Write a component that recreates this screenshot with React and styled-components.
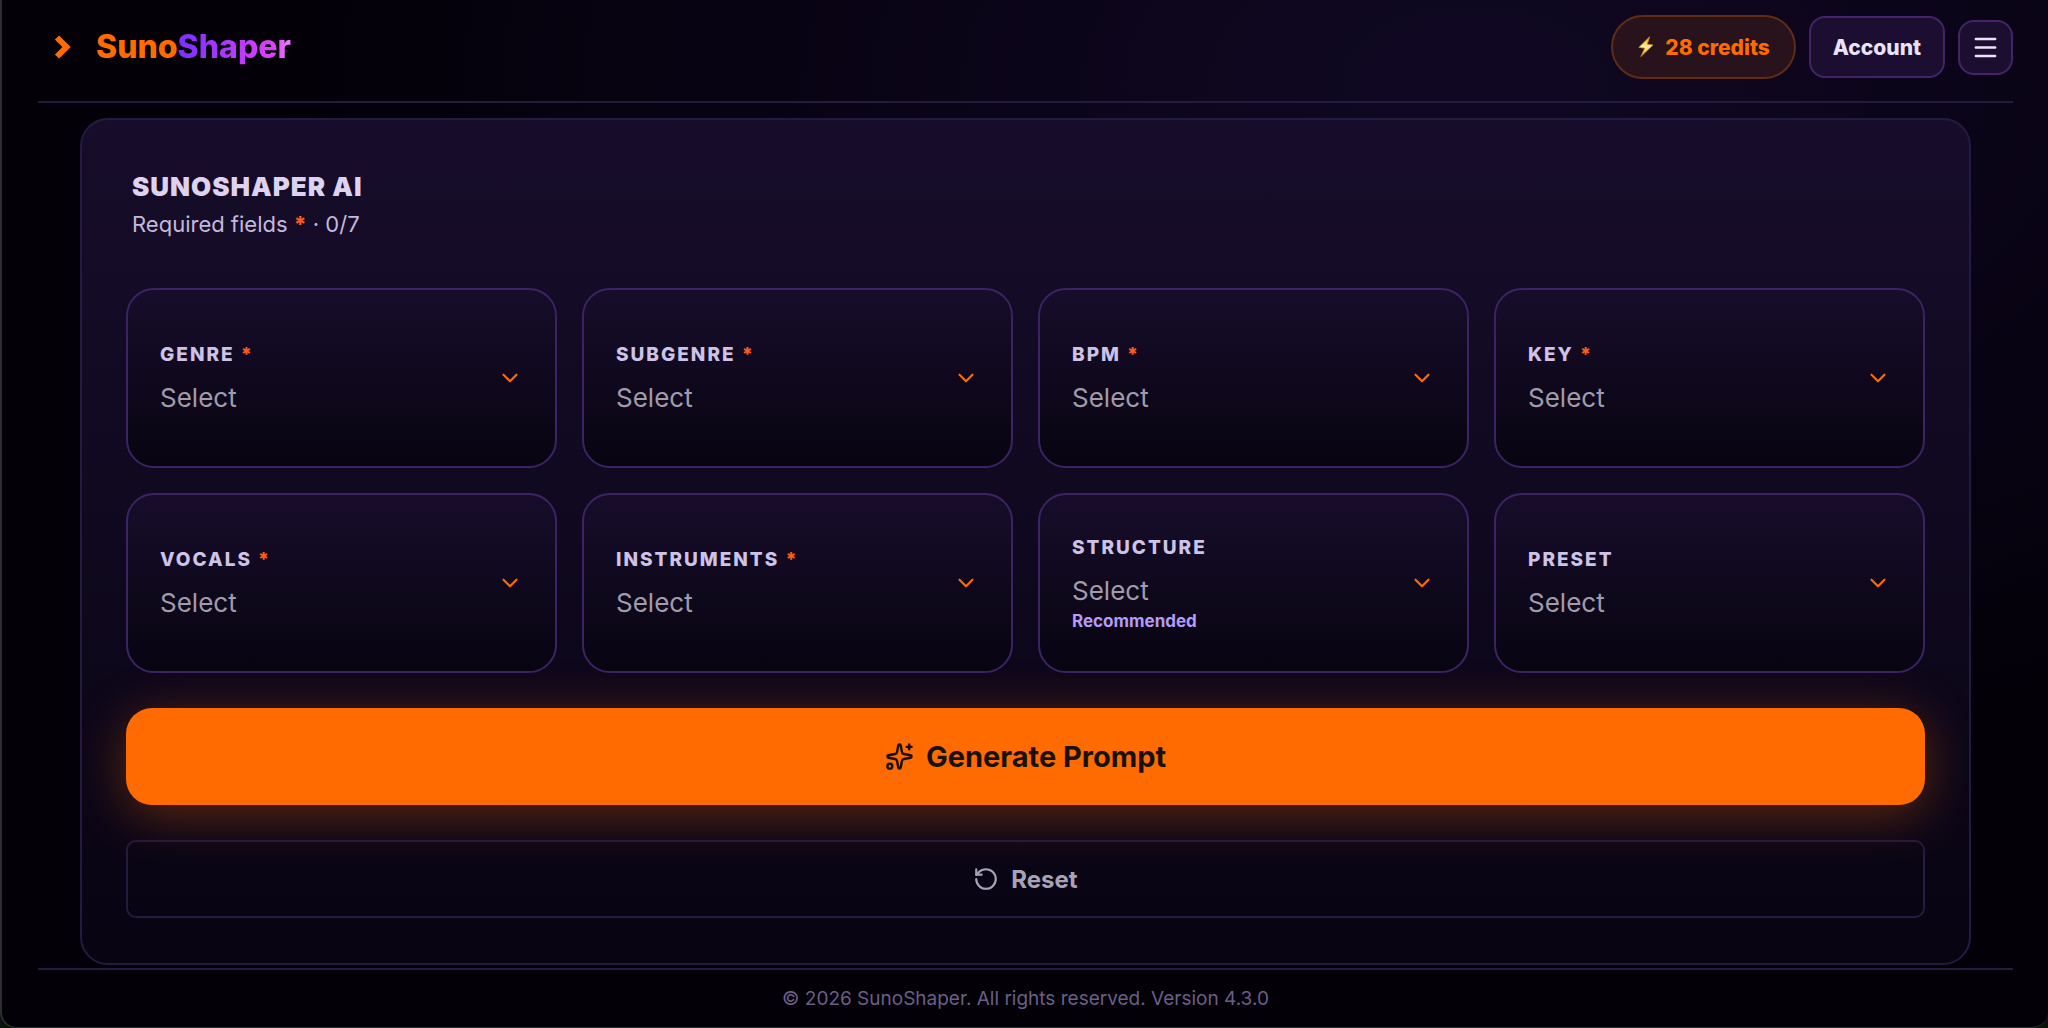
import React, { useState } from 'react'
import styled, { createGlobalStyle, css } from 'styled-components'
import { ChevronDown, Menu, RotateCcw, Sparkles } from 'lucide-react'

const fields = [
  { id: 'genre', label: 'Genre', required: true, options: ['Electronic', 'Rock', 'Hip-Hop'] },
  { id: 'subgenre', label: 'Subgenre', required: true, options: ['House', 'Indie', 'Trap'] },
  { id: 'bpm', label: 'BPM', required: true, options: ['90', '120', '140'] },
  { id: 'key', label: 'Key', required: true, options: ['C major', 'A minor'] },
  { id: 'vocals', label: 'Vocals', required: true, options: ['Female', 'Male'] },
  { id: 'instruments', label: 'Instruments', required: true, options: ['Synth', 'Guitar', 'Piano'] },
  { id: 'structure', label: 'Structure', hint: 'Recommended', options: ['Verse / Chorus'] },
  { id: 'preset', label: 'Preset', options: ['Radio', 'Club'] },
]

const REQUIRED_TOTAL = 7

const BoltIcon = () => (
  <svg width="18" height="22" viewBox="0 0 18 22" aria-hidden="true">
    <defs>
      <linearGradient id="bolt" x1="0" y1="0" x2="0" y2="1">
        <stop offset="0" stopColor="#f5a30c" />
        <stop offset="0.5" stopColor="#fff2a0" />
        <stop offset="1" stopColor="#f0b020" />
      </linearGradient>
    </defs>
    <path
      d="M12.6 0.8 1.8 11.4l6 .8L3.800 20.6 16 9l-5.8-.7z"
      fill="url(#bolt)"
      stroke="#d98a10"
      strokeWidth="0.8"
      strokeLinejoin="round"
    />
  </svg>
)

const LogoMark = () => (
  <svg width="18" height="26" viewBox="0 0 18 26" aria-hidden="true">
    <path d="M3 3.5 12.5 13 3 22.5" fill="none" stroke="#ff6b00" strokeWidth="6" />
  </svg>
)

const Field = ({ id, label, required, hint, options, value, onChange }) => (
  <Tile htmlFor={id}>
    <TileBody>
      <TileLabel>
        {label} {required && <Star>*</Star>}
      </TileLabel>
      <TileSelect id={id} value={value} onChange={(e) => onChange(id, e.target.value)}>
        <option value="">Select</option>
        {options.map((option) => (
          <option key={option} value={option}>
            {option}
          </option>
        ))}
      </TileSelect>
      {hint && <Hint>{hint}</Hint>}
    </TileBody>
    <ChevronDown size={26} color="#ff6b00" />
  </Tile>
)

const App = () => {
  const [values, setValues] = useState({})
  const done = fields.filter((f) => f.required && values[f.id]).length
  const handleChange = (id, value) => setValues({ ...values, [id]: value })

  return (
    <>
      <GlobalStyle />
      <Shell>
        <Header>
          <Brand href="#">
            <LogoMark />
            <BrandName>
              Suno<span>Shaper</span>
            </BrandName>
          </Brand>
          <Actions>
            <Credits type="button">
              <BoltIcon />
              28 credits
            </Credits>
            <AccountButton type="button">Account</AccountButton>
            <MenuButton type="button" aria-label="Menu">
              <Menu size={29} />
            </MenuButton>
          </Actions>
        </Header>

        <Panel>
          <PanelHead>
            <h1>SunoShaper AI</h1>
            <p>
              Required fields <Star>*</Star> · {done}/{REQUIRED_TOTAL}
            </p>
          </PanelHead>
          <Grid>
            {fields.map((field) => (
              <Field
                key={field.id}
                {...field}
                value={values[field.id] || ''}
                onChange={handleChange}
              />
            ))}
          </Grid>
          <GenerateButton type="button">
            <Sparkles size={29} />
            Generate Prompt
          </GenerateButton>
          <ResetButton type="button" onClick={() => setValues({})}>
            <RotateCcw size={26} />
            Reset
          </ResetButton>
        </Panel>

        <Footer>© 2026 SunoShaper. All rights reserved. Version 4.3.0</Footer>
      </Shell>
    </>
  )
}

export default App

const GlobalStyle = createGlobalStyle`
  *,
  *::before,
  *::after {
    box-sizing: border-box;
  }
  body {
    margin: 0;
    background: #0b140c;
    color: #ddd3f0;
    font-family: Inter, 'Liberation Sans', sans-serif;
  }
  h1,
  p {
    margin: 0;
  }
  button,
  select {
    font-family: inherit;
    cursor: pointer;
  }
`

const Shell = styled.div`
  min-height: 100vh;
  display: flex;
  flex-direction: column;
  padding: 0 35px 0 36px;
  border-left: 2px solid #2e2d33;
  border-bottom: 1px solid #2e2d33;
  border-radius: 0 0 16px 16px;
  background:
    radial-gradient(ellipse 1200px 700px at 72% 8%, rgba(76, 44, 160, 0.18), transparent 100%),
    #030008;
`

const Header = styled.header`
  display: flex;
  align-items: center;
  justify-content: space-between;
  height: 103px;
  padding-bottom: 7px;
  border-bottom: 2px solid #241b3f;
`

const Brand = styled.a`
  display: flex;
  align-items: center;
  gap: 24px;
  padding-left: 16px;
  text-decoration: none;
`

const BrandName = styled.span`
  color: #ff6b00;
  font-size: 32px;
  font-weight: 800;
  line-height: 40px;

  span {
    background: linear-gradient(90deg, #7b2fff, #e040fb 85%, #ee82ff);
    background-clip: text;
    color: transparent;
  }
`

const Actions = styled.div`
  display: flex;
  align-items: center;
  gap: 13px;
`

const pill = css`
  display: flex;
  align-items: center;
  justify-content: center;
  border: 2px solid #432469;
  border-radius: 16px;
  background: #1c0e30;
  color: #e9e2f8;
  font-size: 21px;
  font-weight: 800;
`

const Credits = styled.button`
  ${pill}
  gap: 10px;
  height: 64px;
  padding: 0 24px;
  border-color: #622b15;
  border-radius: 32px;
  background: #28121c;
  color: #ff6b00;
`

const AccountButton = styled.button`
  ${pill}
  height: 62px;
  padding: 0 22px;
`

const MenuButton = styled.button`
  ${pill}
  width: 55px;
  height: 55px;
  padding: 0;
`

const Panel = styled.main`
  margin: 15px 42px 3px;
  padding: 45px 44px;
  border: 2px solid #241b3f;
  border-radius: 28px;
  background: linear-gradient(180deg, #170d2b, #080412);
`

const PanelHead = styled.div`
  padding: 6px 6px 0;
  margin-bottom: 48px;

  h1 {
    font-size: 26px;
    font-weight: 900;
    line-height: 32px;
    letter-spacing: 1px;
    text-transform: uppercase;
  }
  p {
    margin-top: 6px;
    color: #c3b9dc;
    font-size: 22px;
    line-height: 31px;
  }
`

const Star = styled.span`
  color: #ff5c1a;
  font-weight: 800;
`

const Grid = styled.div`
  display: grid;
  grid-template-columns: repeat(4, 1fr);
  gap: 25px;

  @media screen and (max-width: 1200px) {
    grid-template-columns: repeat(2, 1fr);
  }
`

const Tile = styled.label`
  display: flex;
  align-items: center;
  min-height: 180px;
  padding: 24px 32px;
  border: 2px solid #3c2364;
  border-radius: 28px;
  background: linear-gradient(180deg, #170d2b, #080410);
  background-origin: border-box;
  cursor: pointer;
`

const TileBody = styled.div`
  display: flex;
  flex: 1;
  flex-direction: column;
`

const TileLabel = styled.span`
  color: #cdc3e6;
  font-size: 19px;
  font-weight: 800;
  line-height: 24px;
  letter-spacing: 2px;
  text-transform: uppercase;
`

const TileSelect = styled.select`
  appearance: none;
  width: 100%;
  height: 32px;
  margin-top: 15px;
  padding: 0;
  border: 0;
  background: transparent;
  color: #a09bad;
  font-size: 26px;
`

const Hint = styled.span`
  margin-top: 4px;
  color: #b49cf8;
  font-size: 17px;
  font-weight: 700;
  line-height: 20px;
`

const GenerateButton = styled.button`
  display: flex;
  align-items: center;
  justify-content: center;
  gap: 12px;
  width: 100%;
  height: 97px;
  margin-top: 35px;
  border: 0;
  border-radius: 26px;
  background: #ff6b00;
  box-shadow: 0 10px 52px rgba(255, 107, 0, 0.34);
  color: #15120f;
  font-size: 29px;
  font-weight: 700;
`

const ResetButton = styled.button`
  display: flex;
  align-items: center;
  justify-content: center;
  gap: 12px;
  width: 100%;
  height: 78px;
  margin-top: 35px;
  border: 2px solid #241b3f;
  border-radius: 10px;
  background: transparent;
  color: #a8a2b8;
  font-size: 24px;
  font-weight: 700;
`

const Footer = styled.footer`
  padding: 16px 0 15px;
  border-top: 2px solid #241b3f;
  color: #6b5f86;
  font-size: 19px;
  line-height: 26px;
  text-align: center;
`
